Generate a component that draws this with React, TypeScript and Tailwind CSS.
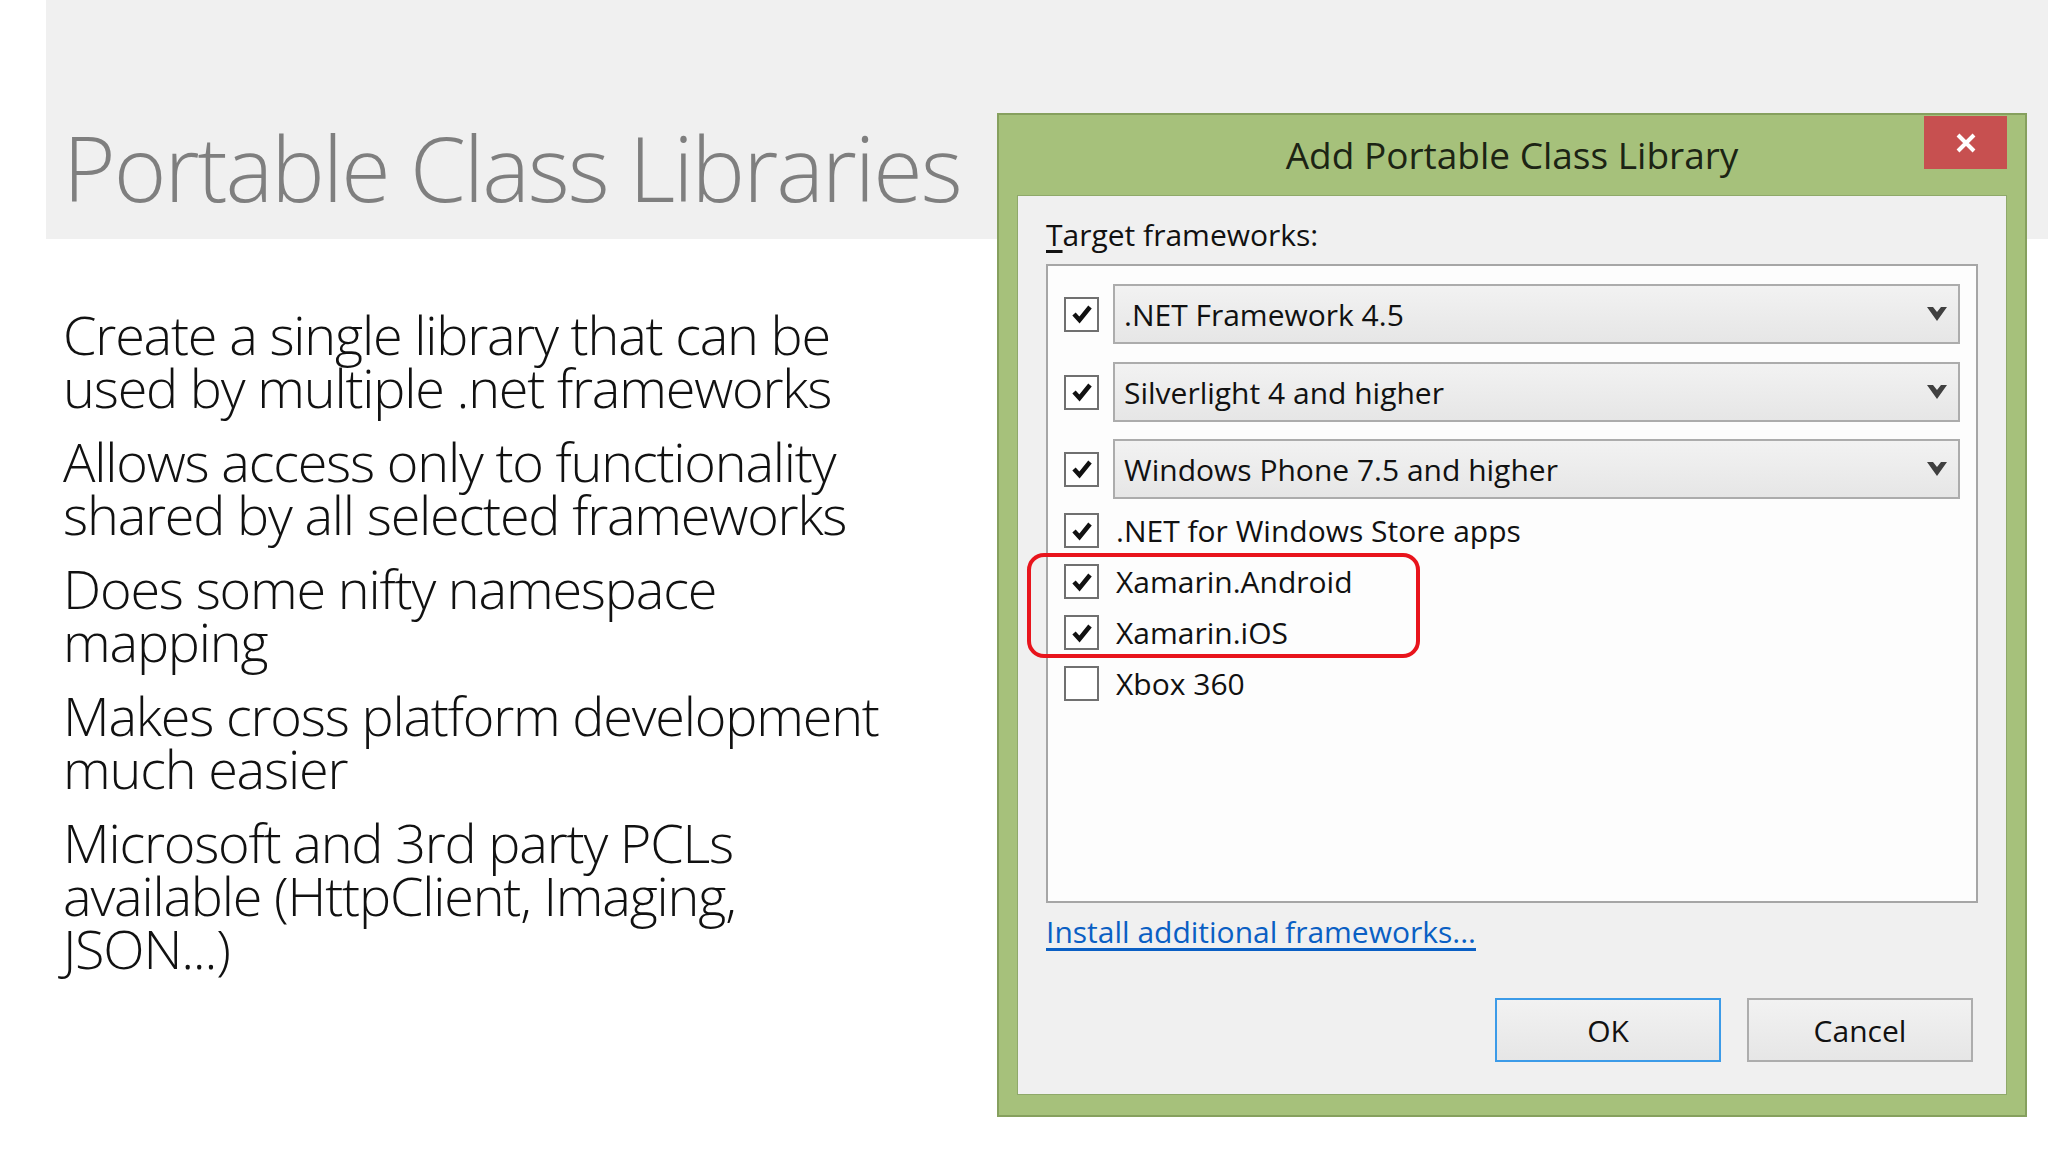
import React from 'react'

const bullets = [
    ['Create a single library that can be', 'used by multiple .net frameworks'],
    ['Allows access only to functionality', 'shared by all selected frameworks'],
    ['Does some nifty namespace', 'mapping'],
    ['Makes cross platform development', 'much easier'],
    ['Microsoft and 3rd party PCLs', 'available (HttpClient, Imaging,', 'JSON...)'],
]

function Check({ checked }: { checked: boolean }) {
    return (
        <div className="w-[35px] h-[35px] shrink-0 border-2 border-[#707070] bg-white flex items-center justify-center">
            {checked && (
                <svg width="24" height="24" viewBox="0 0 24 24">
                    <path d="M4 12 L9.5 18 L20 5" fill="none" stroke="#111" strokeWidth="4.5" strokeLinejoin="miter" />
                </svg>
            )}
        </div>
    )
}

function Chevron() {
    return (
        <svg width="20" height="16" viewBox="0 0 20 16">
            <polygon points="0,1 6,1 10,6 14,1 20,1 10,15" fill="#404040" />
        </svg>
    )
}

function DropRow({ label, className }: { label: string; className?: string }) {
    return (
        <div className={'flex items-center h-[60px] ' + (className ?? '')}>
            <Check checked />
            <div className="ml-[14px] w-[847px] h-[60px] border-2 border-[#acacac] bg-gradient-to-b from-[#f2f2f2] to-[#e6e6e6] flex items-center justify-between pl-[9px] pr-[11px]">
                <span>{label}</span>
                <Chevron />
            </div>
        </div>
    )
}

function PlainRow({ label, checked = true, className }: { label: string; checked?: boolean; className?: string }) {
    return (
        <div className={'flex items-center h-[51px] ' + (className ?? '')}>
            <Check checked={checked} />
            <span className="ml-[17px]">{label}</span>
        </div>
    )
}

export default function App() {
    return (
        <div className="relative w-[2048px] h-[1152px] bg-white overflow-hidden" style={{ fontFamily: '"Open Sans", "Noto Sans", sans-serif' }}>
            {/* slide header band */}
            <div className="ml-[46px] h-[239px] bg-[#f0f0f0] pt-[122px] pl-[17px]">
                <h1 className="text-[90px] leading-[90px] font-light text-[#7f7f7f] tracking-[-2px]">Portable Class Libraries</h1>
            </div>

            {/* bullets */}
            <div className="mt-[69px] ml-[63px] flex flex-col gap-[21px] text-[54px] leading-[53px] font-light text-[#111] tracking-[-1.2px]">
                {bullets.map((lines, i) => (
                    <p key={i}>
                        {lines.map((l, j) => (
                            <span key={j} className="block whitespace-nowrap">{l}</span>
                        ))}
                    </p>
                ))}
            </div>

            {/* dialog window */}
            <div className="absolute left-[997px] top-[113px] w-[1030px] h-[1004px] bg-[#a6c17b] border-2 border-[#86a05e] flex flex-col px-[18px] pb-[20px]">
                <div className="relative h-[80px] shrink-0 flex items-center justify-center">
                    <span className="text-[37px] text-[#1c2414] mt-[-1px]">Add Portable Class Library</span>
                    <div className="absolute right-0 top-[1px] w-[83px] h-[53px] bg-[#c75050] flex items-center justify-center">
                        <svg width="22" height="20" viewBox="0 0 22 20">
                            <path d="M3 2 L19 18 M19 2 L3 18" stroke="#fff" strokeWidth="4" />
                        </svg>
                    </div>
                </div>

                <div className="flex-1 bg-[#f0f0f0] border border-[#8fa96a] flex flex-col pl-[28px] pr-[28px] text-[30px] text-[#111]">
                    <div className="mt-[16px] h-[44px] flex items-center">
                        <span><span className="underline underline-offset-4">T</span>arget frameworks:</span>
                    </div>
                    <div className="mt-[8px] h-[639px] w-[932px] border-2 border-[#a6a6a6] bg-[#fdfdfd] flex flex-col pt-[18px] pl-[16px]">
                        <DropRow label=".NET Framework 4.5" />
                        <DropRow label="Silverlight 4 and higher" className="mt-[18px]" />
                        <DropRow label="Windows Phone 7.5 and higher" className="mt-[17px]" />
                        <PlainRow label=".NET for Windows Store apps" className="mt-[6px]" />
                        <PlainRow label="Xamarin.Android" />
                        <PlainRow label="Xamarin.iOS" />
                        <PlainRow label="Xbox 360" checked={false} />
                    </div>
                    <div className="mt-[6px] h-[44px] flex items-center">
                        <span className="text-[#0a5fc4] underline underline-offset-[5px]">Install additional frameworks...</span>
                    </div>
                    <div className="mt-auto mb-[32px] flex justify-end gap-[26px] pr-[5px]">
                        <div className="w-[226px] h-[64px] border-2 border-[#3c9be8] bg-gradient-to-b from-[#f2f2f2] to-[#e6e6e6] flex items-center justify-center">OK</div>
                        <div className="w-[226px] h-[64px] border-2 border-[#adadad] bg-gradient-to-b from-[#f2f2f2] to-[#e6e6e6] flex items-center justify-center">Cancel</div>
                    </div>
                </div>
            </div>

            {/* red annotation around Xamarin rows */}
            <div className="absolute left-[1027px] top-[553px] w-[393px] h-[105px] border-4 border-[#e8141c] rounded-[17px]" />
        </div>
    )
}
